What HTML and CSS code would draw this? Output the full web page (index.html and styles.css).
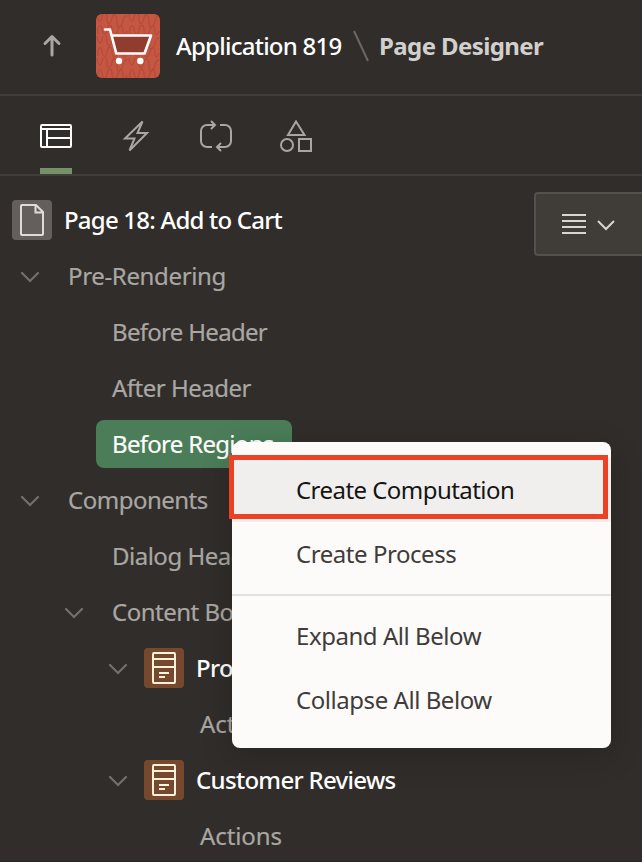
FILE: index.html
```html
<!DOCTYPE html>
<html lang="en">
<head>
<meta charset="utf-8">
<title>Page Designer</title>
<link rel="stylesheet" href="styles.css">
</head>
<body>
<svg class="defs" width="0" height="0" aria-hidden="true">
  <symbol id="chevron" viewBox="0 0 20 12"><path d="M2 2l8 8 8-8"/></symbol>
  <symbol id="region" viewBox="0 0 40 40"><path d="M10 5h20a1 1 0 0 1 1 1v28a1 1 0 0 1-1 1H10a1 1 0 0 1-1-1V6a1 1 0 0 1 1-1zM9 11h22M9 19h22M15 25h10M15 29h6"/></symbol>
</svg>
<div class="app">
  <header class="header">
    <svg class="up" width="20" height="24" viewBox="0 0 20 24"><path d="M10 21V3M3 9.500l7-7 7 7"/></svg>
    <svg class="app-icon" width="64" height="64" viewBox="0 0 64 64">
      <defs>
        <pattern id="waves" width="32" height="22" patternUnits="userSpaceOnUse">
          <path d="M1 0c1 9 4 9 5 3s5-5 5 2 4 5 5-1 5-4 5 4 4 6 6-1 4-6 4-4M2 20c-1-9 3-11 4-5s4 8 5 1 5-6 5 0 4 7 6 0 5-5 5 1 3 4 4 0"/>
        </pattern>
      </defs>
      <rect width="64" height="64" rx="6" fill="#c55642"/>
      <rect width="64" height="64" rx="6" fill="url(#waves)"/>
      <path class="basket" d="M15.800 21.500H55L48.500 40H20.500z"/>
      <path class="cart" d="M9 15.500h5L20.300 39.500H48.500L55 21.500H15.800"/>
      <circle cx="23" cy="47" r="3.200" fill="#fff"/><circle cx="44.300" cy="47" r="3.200" fill="#fff"/>
    </svg>
    <span class="app-name">Application 819</span>
    <svg class="slash" width="18" height="34" viewBox="0 0 18 34"><path d="M2 2l14 30"/></svg>
    <span class="page-name">Page Designer</span>
  </header>
  <nav class="tabs">
    <div class="tab active"><svg width="32" height="32" viewBox="0 0 32 32"><path d="M2 5h28a1 1 0 0 1 1 1v20a1 1 0 0 1-1 1H2a1 1 0 0 1-1-1V6a1 1 0 0 1 1-1zM1 9h30M7 9v18M7 18h24"/></svg></div>
    <div class="tab"><svg width="32" height="32" viewBox="0 0 32 32"><path d="M22.500 1.500L5 18.500h9.500L9.500 30.500 27 13H17.500z"/></svg></div>
    <div class="tab"><svg width="32" height="32" viewBox="0 0 32 32"><path d="M15 5H7a6 6 0 0 0-6 6v10a6 6 0 0 0 6 6h5M11 1l4 4-4 4M20 5h5a6 6 0 0 1 6 6v10a6 6 0 0 1-6 6H17M21 23l-4 4 4 4"/></svg></div>
    <div class="tab"><svg width="32" height="32" viewBox="0 0 32 32"><path d="M16 1.500L8 15h16.500zM19 19h12v12H19z"/><circle cx="7" cy="25" r="6"/></svg></div>
  </nav>
  <main class="tree">
    <button class="options">
      <svg width="24" height="20" viewBox="0 0 24 20"><path d="M0 1h24M0 7h24M0 13h24M0 19h24"/></svg>
      <svg class="caret" width="20" height="12"><use href="#chevron"/></svg>
    </button>
    <div class="row root"><svg class="tile page" width="40" height="40" viewBox="0 0 40 40"><path d="M10 5h14l7 7v22a1 1 0 0 1-1 1H10a1 1 0 0 1-1-1V6a1 1 0 0 1 1-1zM23.500 5v7.500H31"/></svg><span>Page 18: Add to Cart</span></div>
    <div class="row level1 loose"><svg class="chev" width="20" height="12"><use href="#chevron"/></svg><span>Pre-Rendering</span></div>
    <div class="row leaf tight">Before Header</div>
    <div class="row leaf">After Header</div>
    <div class="row leaf tight"><span class="selected">Before Regions</span></div>
    <div class="row level1"><svg class="chev" width="20" height="12"><use href="#chevron"/></svg><span>Components</span></div>
    <div class="row leaf">Dialog Header</div>
    <div class="row level2"><svg class="chev" width="20" height="12"><use href="#chevron"/></svg><span>Content Body</span></div>
    <div class="row level3"><svg class="chev" width="20" height="12"><use href="#chevron"/></svg><svg class="tile region" width="40" height="40"><use href="#region"/></svg><span>Product</span></div>
    <div class="row action">Actions</div>
    <div class="row level3"><svg class="chev" width="20" height="12"><use href="#chevron"/></svg><svg class="tile region" width="40" height="40"><use href="#region"/></svg><span>Customer Reviews</span></div>
    <div class="row action">Actions</div>
  </main>
  <div class="menu">
    <div class="item current">Create Computation</div>
    <div class="item">Create Process</div>
    <hr>
    <div class="item">Expand All Below</div>
    <div class="item">Collapse All Below</div>
  </div>
</div>
</body>
</html>
```
FILE: styles.css
```css
*, *::after { box-sizing: border-box; }
body {
  margin: 0;
  background: #312d2a;
  color: #a9a7a3;
  font: 24px/32px "Noto Sans", sans-serif;
  letter-spacing: -0.5px;
}
svg { flex: none; fill: none; stroke: currentColor; stroke-width: 2; }
.defs { position: absolute; }
.app { position: relative; height: 862px; overflow: hidden; border-bottom: 1px solid #292124; }
.header {
  display: flex;
  align-items: center;
  height: 96px;
  padding: 0 0 2px 42px;
  border-bottom: 2px solid #403c38;
}
.up { stroke-width: 3; stroke-linecap: round; stroke-linejoin: round; }
.app-icon { margin: 0 16px 0 34px; stroke: none; }
.app-icon pattern path { stroke: #b24b38; stroke-width: 1.2; }
.basket { fill: #903c2e; }
.cart { stroke: #fff; stroke-width: 2.6; stroke-linecap: round; stroke-linejoin: round; }
.app-name { width: 176px; color: #fff; font-weight: 500; letter-spacing: -0.75px; white-space: nowrap; }
.slash { color: #6b6763; margin-right: 9px; }
.page-name { color: #d2d0cd; font-weight: 700; letter-spacing: -0.6px; white-space: nowrap; }
.tabs {
  display: flex;
  gap: 48px;
  height: 80px;
  padding: 24px 0 0 40px;
  border-bottom: 2px solid #403c38;
}
.tab { height: 54px; }
.tab svg { display: block; }
.tab.active { color: #fff; border-bottom: 6px solid #759269; }
.tree { position: relative; padding-top: 16px; -webkit-text-stroke: .2px; }
.options {
  position: absolute;
  top: 16px;
  left: 534px;
  display: flex;
  align-items: center;
  gap: 10px;
  width: 120px;
  height: 64px;
  padding: 0 0 0 26px;
  border: 2px solid #55514d;
  border-radius: 4px;
  background: #403c38;
  color: #d8d6d1;
}
.caret { margin-top: 2px; }
.row { display: flex; align-items: center; height: 56px; white-space: nowrap; }
.root { padding-left: 12px; color: #fff; font-weight: 500; letter-spacing: -0.78px; -webkit-text-stroke: 0; }
.tile { margin-right: 12px; border-radius: 4px; }
.page { background: #655f5b; color: #dedcda; }
.region { background: #76492f; color: #fff1da; }
.chev { margin-top: 2px; color: #73706c; stroke-width: 2.2; stroke-linecap: round; }
.level1 { padding-left: 20px; }
.level1 .chev, .level2 .chev { margin-right: 28px; }
.level2 { padding-left: 64px; }
.level3 { padding-left: 108px; color: #fff; font-weight: 500; letter-spacing: -0.69px; -webkit-text-stroke: 0; }
.level3 .chev { margin-right: 16px; }
.leaf { padding-left: 112px; }
.action { padding-left: 200px; letter-spacing: -0.1px; }
.tight { letter-spacing: -0.7px; }
.loose { letter-spacing: -0.35px; }
.selected {
  width: 196px;
  margin-left: -16px;
  padding: 8px 16px;
  border-radius: 8px;
  background: #4a7d58;
  color: #fff;
}
.menu {
  position: absolute;
  top: 442px;
  left: 232px;
  width: 379px;
  height: 306px;
  padding: 16px 0;
  border-radius: 8px;
  background: #fcfbfa;
  color: #403c39;
  letter-spacing: -0.45px;
  box-shadow: 0 8px 32px rgba(0, 0, 0, .2);
}
.item { height: 64px; padding: 16px 0 16px 64px; white-space: nowrap; }
.current { position: relative; background: #f0efee; color: #161513; letter-spacing: -0.55px; }
.current::after {
  content: "";
  position: absolute;
  top: -3px;
  left: -3px;
  width: 379px;
  height: 64px;
  border: 5px solid #ed4126;
}
hr { height: 2px; margin: 8px 0; border: 0; background: #e3e2e0; }
```
